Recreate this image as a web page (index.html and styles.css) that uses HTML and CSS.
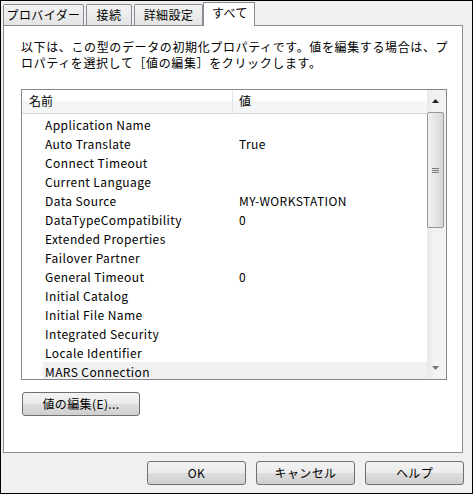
FILE: index.html
```html
<!DOCTYPE html>
<html lang="ja">
<head>
<meta charset="utf-8">
<link rel="stylesheet" href="styles.css">
</head>
<body>
<div class="window">
  <div class="tabs">
    <div class="tab t1">プロバイダー</div>
    <div class="tab t2">接続</div>
    <div class="tab t3">詳細設定</div>
    <div class="tab active">すべて</div>
  </div>
  <div class="panel">
    <p class="desc">以下は、この型のデータの初期化プロパティです。値を編集する場合は、プ<br>ロパティを選択して［値の編集］をクリックします。</p>
    <div class="list">
      <div class="main">
        <div class="head">
          <div class="hname">名前</div>
          <div class="hval">値</div>
        </div>
        <div class="rows">
          <div class="row"><span class="n">Application Name</span><span class="v"></span></div>
          <div class="row"><span class="n">Auto Translate</span><span class="v">True</span></div>
          <div class="row"><span class="n">Connect Timeout</span><span class="v"></span></div>
          <div class="row"><span class="n">Current Language</span><span class="v"></span></div>
          <div class="row"><span class="n">Data Source</span><span class="v">MY-WORKSTATION</span></div>
          <div class="row"><span class="n">DataTypeCompatibility</span><span class="v">0</span></div>
          <div class="row"><span class="n">Extended Properties</span><span class="v"></span></div>
          <div class="row"><span class="n">Failover Partner</span><span class="v"></span></div>
          <div class="row"><span class="n">General Timeout</span><span class="v">0</span></div>
          <div class="row"><span class="n">Initial Catalog</span><span class="v"></span></div>
          <div class="row"><span class="n">Initial File Name</span><span class="v"></span></div>
          <div class="row"><span class="n">Integrated Security</span><span class="v"></span></div>
          <div class="row"><span class="n">Locale Identifier</span><span class="v"></span></div>
          <div class="row hl"><span class="n">MARS Connection</span><span class="v"></span></div>
        </div>
      </div>
      <div class="sbar">
        <div class="sbtn"><svg width="7" height="4" viewBox="0 0 7 4"><path d="M3.5 0 L7 4 L0 4 Z" fill="#222"/></svg></div>
        <div class="thumb"><svg width="7" height="7" viewBox="0 0 7 7"><path d="M0 1.5h7M0 3.5h7M0 5.5h7" stroke="#777" stroke-width="1"/></svg></div>
        <div class="track"></div>
        <div class="sbtn"><svg width="7" height="4" viewBox="0 0 7 4"><path d="M0 0 L7 0 L3.5 4 Z" fill="#777"/></svg></div>
      </div>
    </div>
    <div class="editrow"><button class="btn edit">値の編集(E)...</button></div>
  </div>
  <div class="footer">
    <button class="btn dlg">OK</button>
    <button class="btn dlg">キャンセル</button>
    <button class="btn dlg">ヘルプ</button>
  </div>
</div>
</body>
</html>
```
FILE: styles.css
```css
* { box-sizing: border-box; }
html, body { margin: 0; padding: 0; }
body {
  font-family: "Noto Sans CJK JP", "Noto Sans", sans-serif;
  font-size: 12px;
  color: #000;
  background: #f0f0f0;
}
.window {
  width: 473px;
  height: 494px;
  border: 1px solid #000;
  background: #f0f0f0;
  display: flex;
  flex-direction: column;
}
.tabs {
  display: flex;
  align-items: flex-end;
  height: 24px;
  padding-left: 2px;
  position: relative;
  z-index: 1;
}
.tab {
  height: 21px;
  border: 1px solid #898c95;
  border-bottom: none;
  background: linear-gradient(#f3f3f3, #e4e4e4);
  line-height: 19px;
  text-align: center;
  margin-right: 2px;
  border-radius: 2px 2px 0 0;
  letter-spacing: 0.4px;
}
.t1 { width: 81px; }
.t2 { width: 46px; }
.t3 { width: 69px; }
.tab.active {
  width: 52px;
  height: 24px;
  background: #fff;
  margin-left: -2px;
  margin-bottom: -1px;
  padding-bottom: 4px;
  border-radius: 0;
  text-align: left;
  padding-left: 8px;
}
.panel {
  margin-left: 2px;
  width: 460px;
  height: 428px;
  border: 1px solid #898c95;
  background: #fff;
  padding: 13px 0 0 17px;
}
.desc {
  margin: 0;
  width: 440px;
  line-height: 16px;
  letter-spacing: 0.62px;
  white-space: nowrap;
}
.list {
  margin-top: 18px;
  width: 426px;
  height: 291px;
  border: 1px solid #828790;
  display: flex;
}
.main {
  flex: 1;
  overflow: hidden;
}
.head {
  display: flex;
  height: 24px;
  border-bottom: 1px solid #d5d5d5;
  background: linear-gradient(#ffffff 0%, #ffffff 45%, #f4f5f7 50%, #f4f5f7 100%);
}
.hname {
  width: 211px;
  padding-left: 7px;
  line-height: 22px;
  border-right: 1px solid #e3e4e6;
}
.hval {
  padding-left: 6px;
  line-height: 22px;
}
.rows {
  padding-top: 1px;
  padding-left: 21px;
}
.row {
  display: flex;
  height: 19px;
  line-height: 19px;
  letter-spacing: 0.4px;
}
.row .n { width: 196px; padding-left: 2px; }
.row.hl { background: #f0f0f0; }
.sbar {
  width: 19px;
  display: flex;
  flex-direction: column;
  background: linear-gradient(90deg, #e9e9e9, #f2f2f2 40%, #f2f2f2);
}
.sbtn {
  height: 22px;
  display: flex;
  align-items: center;
  justify-content: center;
  padding-right: 2px;
}
.thumb {
  height: 116px;
  width: 17px;
  border: 1px solid #979797;
  border-radius: 2px;
  background: linear-gradient(90deg, #f0f0f0, #e6e6e6 50%, #d6d6d6);
  display: flex;
  align-items: center;
  justify-content: center;
}
.track { flex: 1; }
.editrow {
  margin-top: 12px;
  padding-left: 1px;
}
.btn {
  font-family: "Noto Sans CJK JP", "Noto Sans", sans-serif;
  font-size: 12px;
  color: #000;
  border: 1px solid #707070;
  border-radius: 3px;
  background: linear-gradient(#f2f2f2 0%, #ebebeb 50%, #dddddd 51%, #cfcfcf 100%);
  padding: 0;
  height: 24px;
  line-height: 20px;
  letter-spacing: 0.4px;
}
.edit { width: 118px; }
.footer {
  display: flex;
  justify-content: flex-end;
  gap: 10px;
  padding: 8px 8px 0 0;
}
.dlg { width: 99px; }
```
